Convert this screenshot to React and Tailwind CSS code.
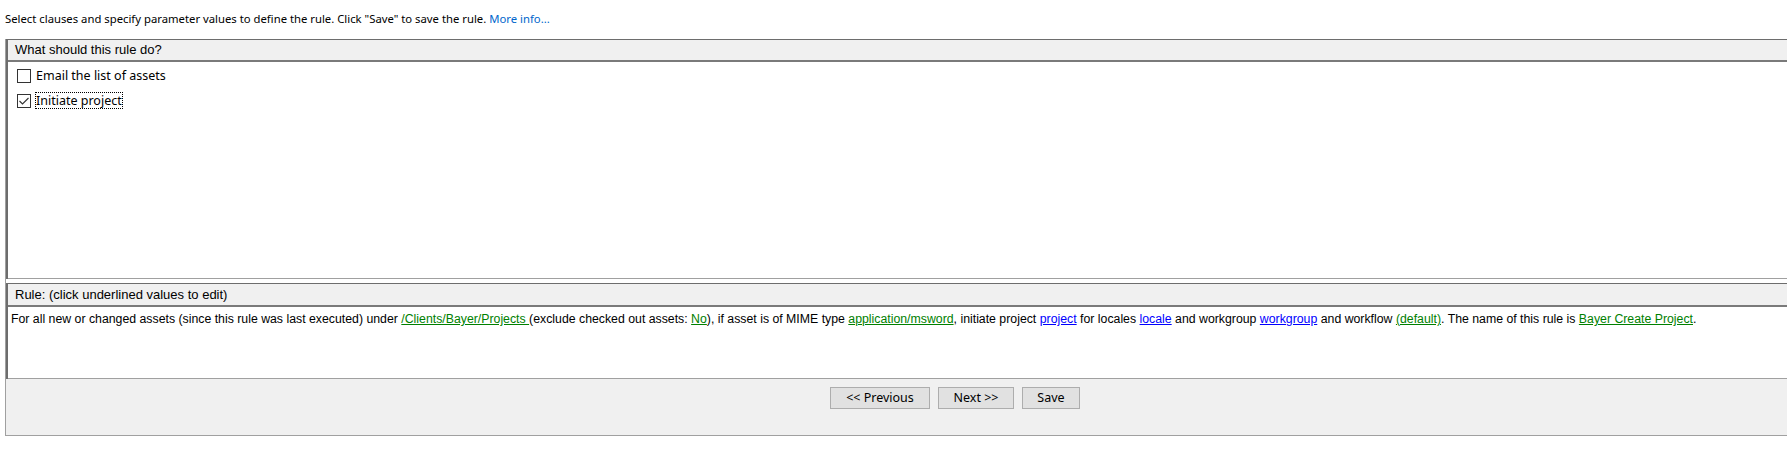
const UI = { fontFamily: '"Noto Sans", "Open Sans", sans-serif' }
const ARIAL = { fontFamily: '"Liberation Sans", Arial, sans-serif' }

const G = 'text-[#008000] underline cursor-pointer'
const B = 'text-[#0000ff] underline cursor-pointer'

function Check({ checked, label, focused }) {
  return (
    <div className="flex items-center h-[25px] pl-[9px] gap-[5px]">
      <span className="w-[14px] h-[14px] border border-[#333333] bg-white flex items-center justify-center">
        {checked && (
          <svg width="12" height="12" viewBox="0 0 12 12">
            <path d="M1.5 6 L4.5 9 L10.5 3" fill="none" stroke="#333" strokeWidth="1.1" />
          </svg>
        )}
      </span>
      <span className={`text-[12.5px] text-black leading-[15px] ${focused ? 'outline outline-1 outline-dotted outline-black' : ''}`}>
        {label}
      </span>
    </div>
  )
}

function Btn({ children, w }) {
  return (
    <button className={`h-[22px] ${w} bg-[#e1e1e1] border border-[#adadad] text-[12.5px] text-black`} style={UI}>
      {children}
    </button>
  )
}

export default function App() {
  return (
    <div className="w-[1787px] h-[455px] bg-white overflow-hidden">
      <div className="h-[39px] pl-[5px] pt-[11px] text-[11.3px] text-black leading-[15px]" style={UI}>
        Select clauses and specify parameter values to define the rule. Click "Save" to save the rule.{' '}
        <span className="text-[#0066cc]">More info...</span>
      </div>

      <div className="ml-[5px] w-[1900px] border-l border-b border-[#a0a0a0]">
        {/* what should this rule do */}
        <div className="border-l-2 border-[#6d6d6d]">
          <div className="h-[21px] border-t border-[#6d6d6d] bg-[#f0f0f0] flex items-center pl-[7px] text-[13px] text-black" style={ARIAL}>
            What should this rule do?
          </div>
          <div className="h-[2px] bg-[#7a7a7a]" />
          <div className="h-[216px] bg-white pt-[1px]" style={UI}>
            <Check label="Email the list of assets" />
            <Check label="Initiate project" checked focused />
          </div>
          <div className="h-px bg-[#a0a0a0]" />
        </div>

        <div className="h-[4px] bg-white" />

        {/* rule */}
        <div className="border-l-2 border-[#6d6d6d]">
          <div className="h-[22px] border-t border-[#6d6d6d] bg-[#f0f0f0] flex items-center pl-[7px] text-[13px] text-black" style={ARIAL}>
            Rule: (click underlined values to edit)
          </div>
          <div className="h-[2px] bg-[#7a7a7a]" />
          <div className="h-[71px] bg-white pl-[3px] pt-[5px] text-[12.3px] text-black leading-[15px]" style={ARIAL}>
            For all new or changed assets (since this rule was last executed) under{' '}
            <span className={G}>/Clients/Bayer/Projects </span> (exclude checked out assets:{' '}
            <span className={G}>No</span>), if asset is of MIME type{' '}
            <span className={G}>application/msword</span>, initiate project{' '}
            <span className={B}>project</span> for locales <span className={B}>locale</span> and workgroup{' '}
            <span className={B}>workgroup</span> and workflow <span className={G}>(default)</span>. The name of this rule is{' '}
            <span className={G}>Bayer Create Project</span>.
          </div>
          <div className="h-px bg-[#a0a0a0]" />
        </div>

        {/* buttons */}
        <div className="h-[56px] bg-[#f0f0f0] pt-[8px]">
          <div className="w-[1898px] flex justify-center gap-[8px]">
            <Btn w="w-[100px]">&lt;&lt; Previous</Btn>
            <Btn w="w-[76px]">Next &gt;&gt;</Btn>
            <Btn w="w-[58px]">Save</Btn>
          </div>
        </div>
      </div>
    </div>
  )
}
